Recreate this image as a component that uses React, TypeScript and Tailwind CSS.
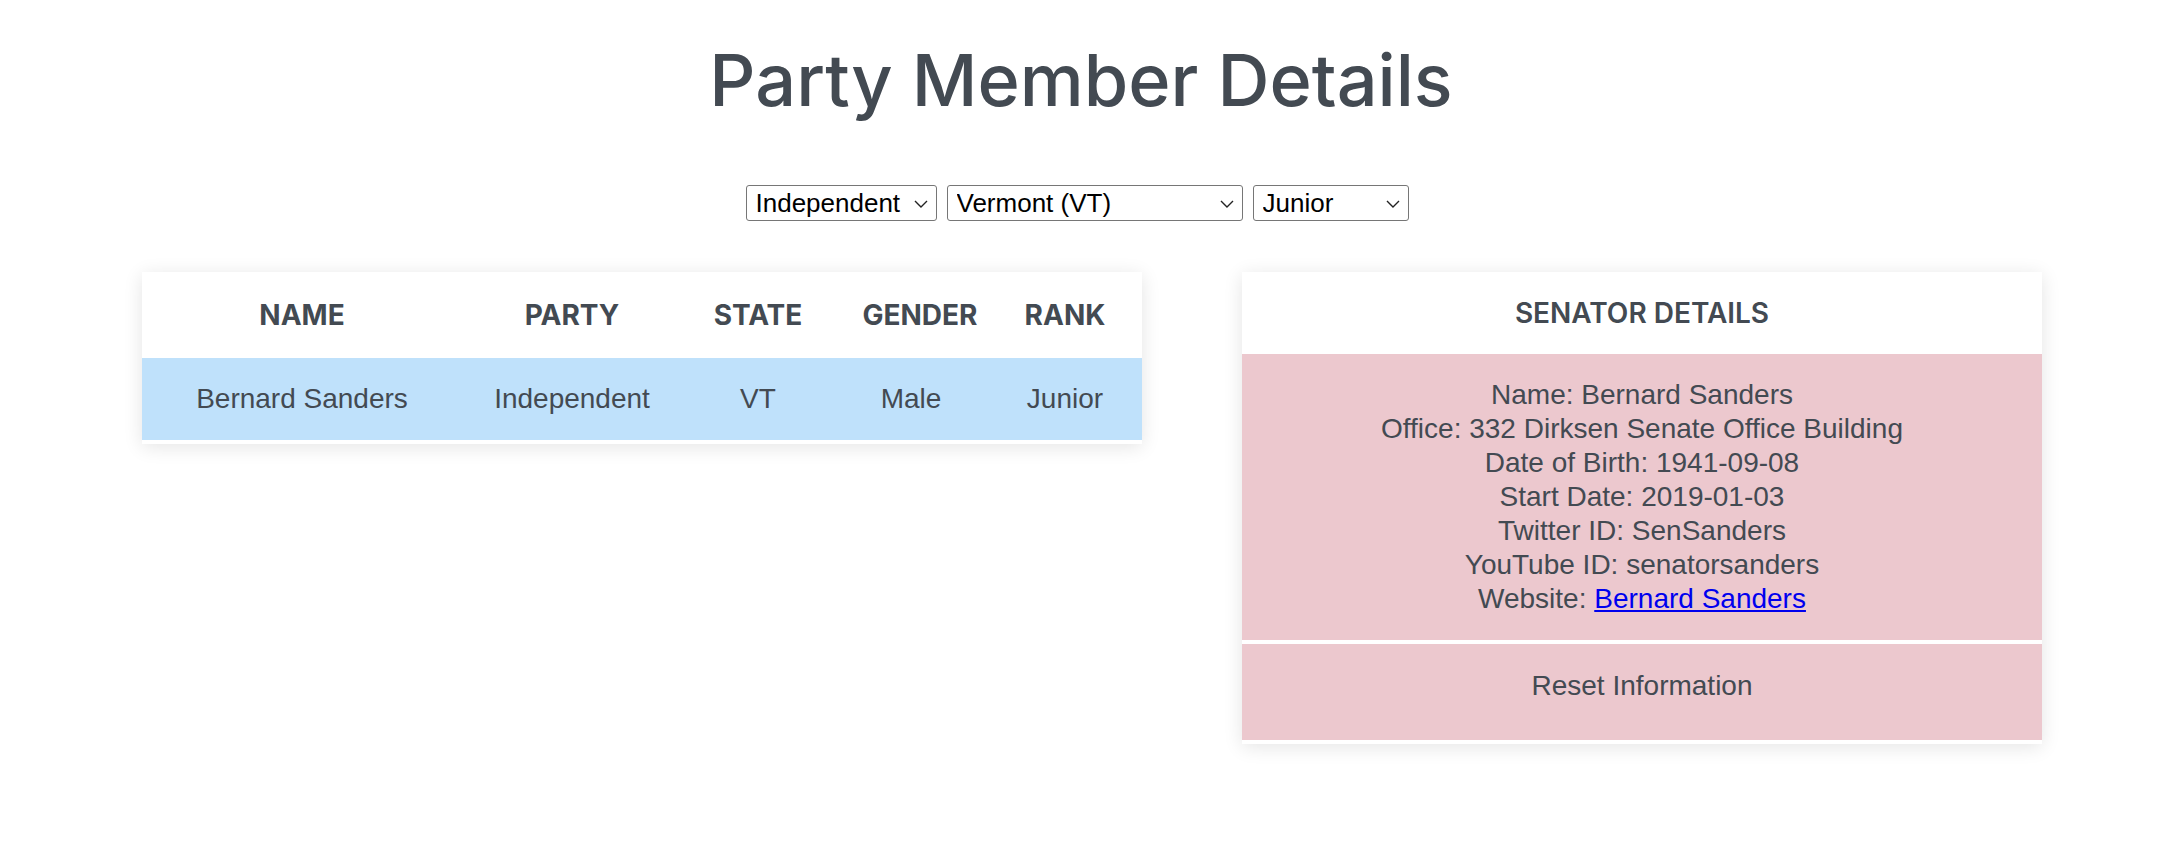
import { useState } from 'react'

const senator = {
  name: 'Bernard Sanders',
  party: 'Independent',
  state: 'VT',
  gender: 'Male',
  rank: 'Junior',
  office: '332 Dirksen Senate Office Building',
  dob: '1941-09-08',
  startDate: '2019-01-03',
  twitter: 'SenSanders',
  youtube: 'senatorsanders',
  website: 'https://www.sanders.senate.gov'
}

interface DropdownProps {
  value: string
  options: string[]
  className: string
  onChange: (v: string) => void
}

function Dropdown({ value, options, className, onChange }: DropdownProps) {
  return (
    <div className={`relative ${className}`}>
      <select
        value={value}
        onChange={(e) => onChange(e.target.value)}
        className="h-[36px] w-full appearance-none rounded-[3px] border border-[#767676] bg-white pl-[9px] pr-[30px] font-['Liberation_Sans',Arial,sans-serif] text-[26px] leading-[30px] text-black"
      >
        {options.map((o) => (
          <option key={o}>{o}</option>
        ))}
      </select>
      {/* chevron */}
      <svg
        className="pointer-events-none absolute right-[9px] top-[15px]"
        width="14"
        height="8"
        viewBox="0 0 14 8"
        fill="none"
      >
        <polyline points="1,1 7,7 13,1" stroke="#222" strokeWidth="1.4" />
      </svg>
    </div>
  )
}

export default function App() {
  const [party, setParty] = useState('Independent')
  const [state, setState] = useState('Vermont (VT)')
  const [rank, setRank] = useState('Junior')

  return (
    <div className="min-h-[848px] w-[2162px] bg-white font-['Liberation_Sans',Arial,sans-serif] text-[#434a52]">
      <h1 className="pt-[43px] text-center font-['Inter',sans-serif] text-[72px] font-medium leading-[74px] text-[#434a52]">
        Party Member Details
      </h1>

      {/* Filters */}
      <div className="mt-[68px] flex justify-center gap-[10px] pr-[8px]">
        <Dropdown
          value={party}
          onChange={setParty}
          options={['Democrat', 'Republican', 'Independent']}
          className="w-[191px]"
        />
        <Dropdown
          value={state}
          onChange={setState}
          options={['Vermont (VT)', 'Maine (ME)', 'New York (NY)']}
          className="w-[296px]"
        />
        <Dropdown
          value={rank}
          onChange={setRank}
          options={['Junior', 'Senior']}
          className="w-[156px]"
        />
      </div>

      <div className="mt-[51px] flex items-start gap-[100px] pl-[142px]">
        {/* Members table */}
        <div className="w-[1000px] bg-white pb-[4px] shadow-[0_3px_18px_rgba(0,0,0,0.11)]">
          <table className="w-full table-fixed">
            <colgroup>
              <col className="w-[320px]" />
              <col className="w-[220px]" />
              <col className="w-[152px]" />
              <col className="w-[154px]" />
              <col className="w-[154px]" />
            </colgroup>
            <thead>
              <tr className="h-[86px] font-['Inter',sans-serif] text-[28px] font-semibold">
                <th className="text-center align-middle">NAME</th>
                <th className="text-center align-middle">PARTY</th>
                <th className="text-center align-middle">STATE</th>
                <th className="pl-[18px] text-center align-middle">GENDER</th>
                <th className="text-center align-middle">RANK</th>
              </tr>
            </thead>
            <tbody>
              <tr className="h-[82px] bg-[#bfe1fb] text-[28px]">
                <td className="text-center align-middle">{senator.name}</td>
                <td className="text-center align-middle">{senator.party}</td>
                <td className="text-center align-middle">{senator.state}</td>
                <td className="text-center align-middle">{senator.gender}</td>
                <td className="text-center align-middle">{senator.rank}</td>
              </tr>
            </tbody>
          </table>
        </div>

        {/* Details card */}
        <div className="flex w-[800px] flex-col gap-[4px] bg-white pb-[4px] shadow-[0_3px_18px_rgba(0,0,0,0.11)]">
          <div className="flex h-[82px] items-center justify-center font-['Inter',sans-serif] text-[28px] font-semibold">
            SENATOR DETAILS
          </div>
          <div className="-mt-[4px] flex flex-col items-center bg-[#ecc8ce] py-[24px] text-[28px] leading-[34px]">
            <div>Name: {senator.name}</div>
            <div>Office: {senator.office}</div>
            <div>Date of Birth: {senator.dob}</div>
            <div>Start Date: {senator.startDate}</div>
            <div>Twitter ID: {senator.twitter}</div>
            <div>YouTube ID: {senator.youtube}</div>
            <div>
              Website:{' '}
              <a href={senator.website} className="text-[#0000ee] underline">
                {senator.name}
              </a>
            </div>
          </div>
          <div className="bg-[#ecc8ce] pt-[25px] pb-[37px] text-center text-[28px] leading-[34px]">
            Reset Information
          </div>
        </div>
      </div>
    </div>
  )
}
